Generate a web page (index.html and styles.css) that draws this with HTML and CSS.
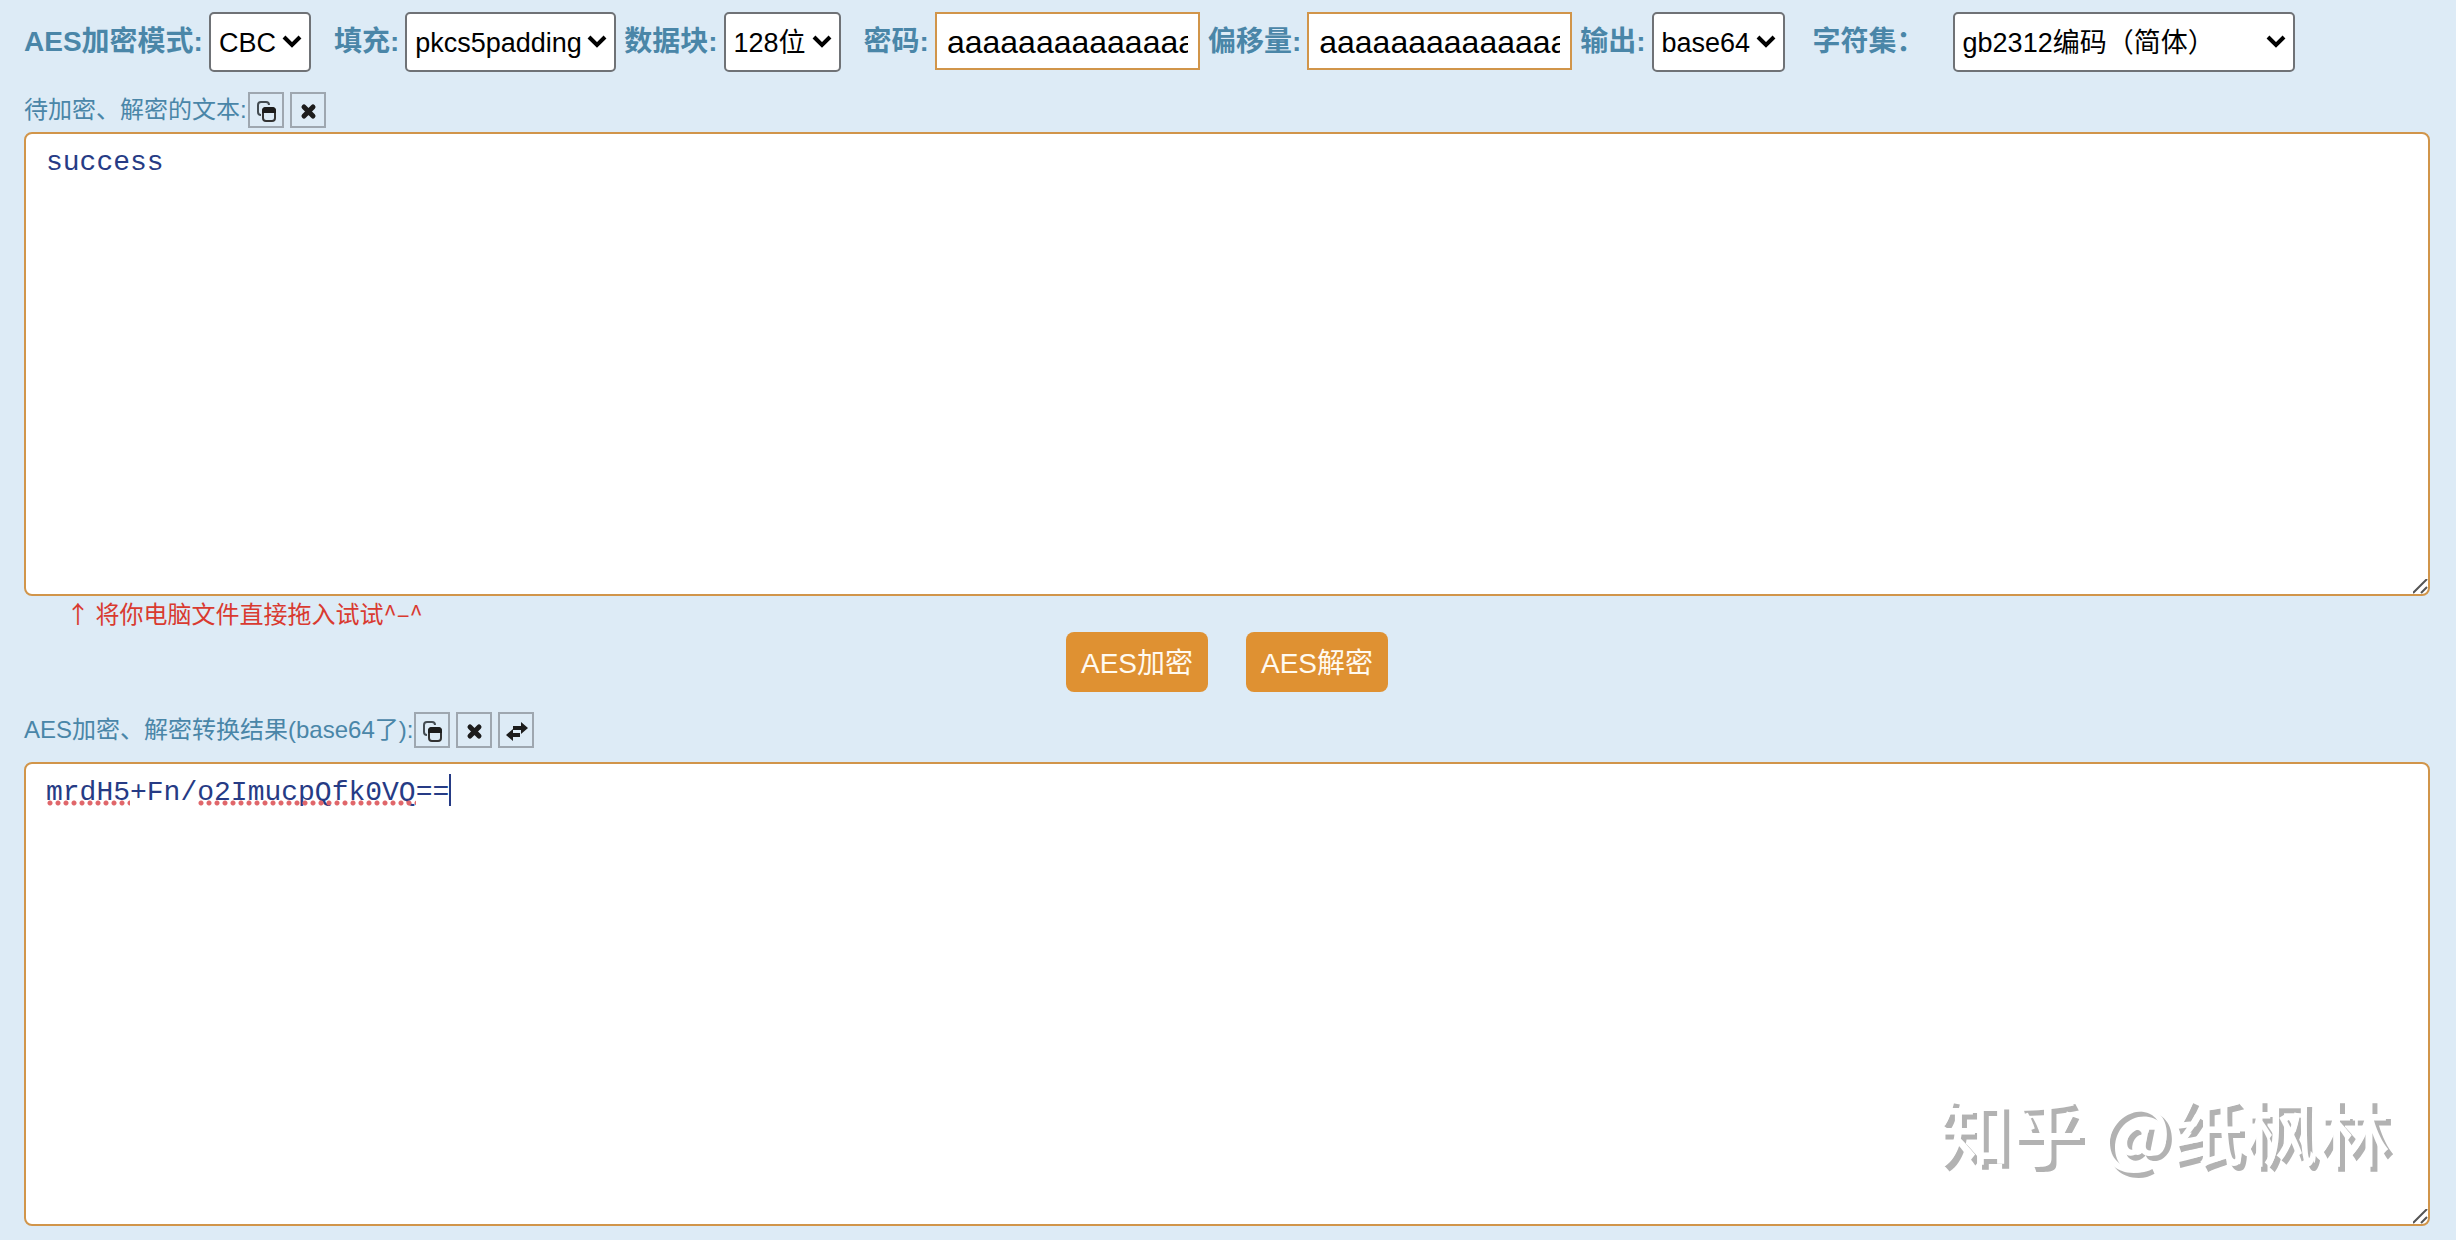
FILE: index.html
```html
<!DOCTYPE html>
<html lang="zh-CN">
  <head>
    <meta charset="UTF-8" />
    <meta name="viewport" content="width=device-width, initial-scale=1.0" />
    <title>AES加密、解密</title>
    <link rel="stylesheet" href="styles.css">
  </head>
  <body>
    <form class="page">
      <div class="toolbar">
        <div class="field">
          <label for="mode">AES加密模式:</label>
          <select id="mode"><option>CBC</option></select>
        </div>
        <div class="field spaced">
          <label for="padding">填充:</label>
          <select id="padding"><option>pkcs5padding</option></select>
        </div>
        <div class="field">
          <label for="block">数据块:</label>
          <select id="block"><option>128位</option></select>
        </div>
        <div class="field spaced">
          <label for="password">密码:</label>
          <input type="text" id="password" value="aaaaaaaaaaaaaaaa" />
        </div>
        <div class="field">
          <label for="iv">偏移量:</label>
          <input type="text" id="iv" value="aaaaaaaaaaaaaaaa" />
        </div>
        <div class="field">
          <label for="output">输出:</label>
          <select id="output"><option>base64</option></select>
        </div>
        <div class="field charset">
          <label for="charset">字符集：</label>
          <select id="charset"><option>gb2312编码（简体）</option></select>
        </div>
      </div>

      <div class="caption">
        <label for="source">待加密、解密的文本:</label>
        <div class="tools">
          <button type="button" class="tool" aria-label="复制">
            <svg viewBox="0 0 32 32"><path d="M11 21q-3 0-3-3v-7q0-3 3-3h5q3 0 3 3" fill="none" stroke="#444c52" stroke-width="2"/><rect x="13" y="14" width="12" height="13" rx="3" fill="#ddebf6" stroke="#333" stroke-width="2"/><path d="M12 19v-2q0-4 4-4h6q4 0 4 4v2z" fill="#1c1c1c"/></svg>
          </button>
          <button type="button" class="tool" aria-label="清空">
            <svg viewBox="0 0 32 32"><path d="M12 13l9 9M21 13L12 22" stroke="#1c1c1c" stroke-width="5" stroke-linecap="round"/></svg>
          </button>
        </div>
      </div>
      <div class="box">
        <textarea id="source" spellcheck="false">success</textarea>
      </div>
      <p class="hint">↑ 将你电脑文件直接拖入试试^–^</p>

      <div class="actions">
        <button type="button" class="btn">AES加密</button>
        <button type="button" class="btn">AES解密</button>
      </div>

      <div class="caption result">
        <label for="result">AES加密、解密转换结果(base64了):</label>
        <div class="tools">
          <button type="button" class="tool" aria-label="复制">
            <svg viewBox="0 0 32 32"><path d="M11 21q-3 0-3-3v-7q0-3 3-3h5q3 0 3 3" fill="none" stroke="#444c52" stroke-width="2"/><rect x="13" y="14" width="12" height="13" rx="3" fill="#ddebf6" stroke="#333" stroke-width="2"/><path d="M12 19v-2q0-4 4-4h6q4 0 4 4v2z" fill="#1c1c1c"/></svg>
          </button>
          <button type="button" class="tool" aria-label="清空">
            <svg viewBox="0 0 32 32"><path d="M12 13l9 9M21 13L12 22" stroke="#1c1c1c" stroke-width="5" stroke-linecap="round"/></svg>
          </button>
          <button type="button" class="tool" aria-label="交换">
            <svg viewBox="0 0 32 32"><path d="M13 12h8V8l7 6-7 6v-4h-8zM20 19v4h-7v4l-7-6 7-6v4z" fill="#1c1c1c"/></svg>
          </button>
        </div>
      </div>
      <div class="box">
        <textarea id="result" spellcheck="false">mrdH5+Fn/o2ImucpQfk0VQ==</textarea>
        <div class="marks">
          <span class="typo short"></span>
          <span class="typo long"></span>
          <span class="caret"></span>
        </div>
        <div class="watermark">知乎 @纸枫林</div>
      </div>
    </form>
  </body>
</html>
```
FILE: styles.css
```css
* {
  box-sizing: border-box;
}
body {
  margin: 0;
  background-color: #ddebf6;
  font-family: "Liberation Sans", "Noto Sans CJK SC", sans-serif;
  color: #4a86a8;
}
.page {
  min-height: 100vh;
  padding: 12px 26px 14px 24px;
  display: flex;
  flex-direction: column;
}

/* top settings */
.toolbar {
  display: flex;
  align-items: flex-start;
  gap: 8px;
  margin-bottom: 20px;
}
.field {
  display: flex;
  gap: 6px;
  font-size: 28px;
  line-height: 60px;
  white-space: nowrap;
}
.field label {
  font-weight: bold;
}
.spaced {
  margin-left: 15px;
}
.charset {
  margin-left: 20px;
  gap: 28px;
}
.charset select {
  width: 342px;
}
select {
  appearance: none;
  height: 60px;
  padding: 2px 32px 0 8px;
  border: 2px solid #6f7276;
  border-radius: 5px;
  background: #fff url("data:image/svg+xml,%3Csvg xmlns='http://www.w3.org/2000/svg' viewBox='0 0 20 14'%3E%3Cpath d='M2 2l8 8 8-8' fill='none' stroke='%23000' stroke-width='4'/%3E%3C/svg%3E") no-repeat right 7px center / 20px 14px;
  color: #000;
  font-family: inherit;
  font-size: 27px;
}
.field input {
  width: 265px;
  height: 58px;
  padding: 2px 10px 0;
  border: 2px solid #d1954a;
  background-color: #fff;
  color: #000;
  font-family: inherit;
  font-size: 32px;
}

/* captions with the small icon buttons */
.caption {
  display: flex;
  align-items: center;
  gap: 1px;
  font-size: 24px;
  line-height: 36px;
  margin-bottom: 4px;
}
.tools {
  display: flex;
  gap: 6px;
}
.tool {
  width: 36px;
  height: 36px;
  padding: 0;
  border: 2px solid #9ea7b0;
  background-color: transparent;
}
.tool svg {
  display: block;
  width: 32px;
  height: 32px;
}
.result {
  margin: 20px 0 14px;
}

.box {
  flex: 1 1 0;
  position: relative;
  display: flex;
}
textarea {
  flex: 1;
  padding: 13px 20px;
  border: 2px solid #d1954a;
  border-radius: 8px;
  background-color: #fff;
  color: #263b85;
  font-family: "Liberation Mono", monospace;
  font-size: 28px;
  line-height: 32px;
}
textarea::-webkit-resizer {
  background: url("data:image/svg+xml,%3Csvg xmlns='http://www.w3.org/2000/svg' viewBox='0 0 15 15'%3E%3Cpath d='M0 14L14 0M8 14l6-6' fill='none' stroke='%23555' stroke-width='2'/%3E%3C/svg%3E") no-repeat center;
}
.hint {
  margin: 0 0 2px 42px;
  color: #d93a30;
  font-family: "Noto Sans CJK SC", sans-serif;
  font-size: 24px;
  line-height: 34px;
}
.actions {
  display: flex;
  justify-content: center;
  gap: 38px;
}
.btn {
  height: 60px;
  padding: 0 15px 2px;
  border: 0;
  border-radius: 8px;
  background-color: #df9132;
  color: #fffaf0;
  font-family: inherit;
  font-size: 28px;
}

/* spelling dots and caret over the result text */
.marks {
  position: absolute;
  top: 12px;
  left: 22px;
  display: flex;
  height: 32px;
  font-family: "Liberation Mono", monospace;
  font-size: 28px;
  pointer-events: none;
}
.typo {
  background: radial-gradient(circle, #e0666a 2px, transparent 3px) repeat-x left bottom / 8px 6px;
}
.short {
  width: 5ch;
  margin-right: 4ch;
}
.long {
  width: 13ch;
  margin-right: 2ch;
}
.caret {
  width: 2px;
  background-color: #263b85;
}
.watermark {
  position: absolute;
  right: 40px;
  bottom: 46px;
  color: #fff;
  font-family: "Noto Sans CJK SC", sans-serif;
  font-size: 73px;
  font-weight: 500;
  line-height: 104px;
  text-shadow: 5px 5px 0 #b2b2b2;
  pointer-events: none;
}
```
